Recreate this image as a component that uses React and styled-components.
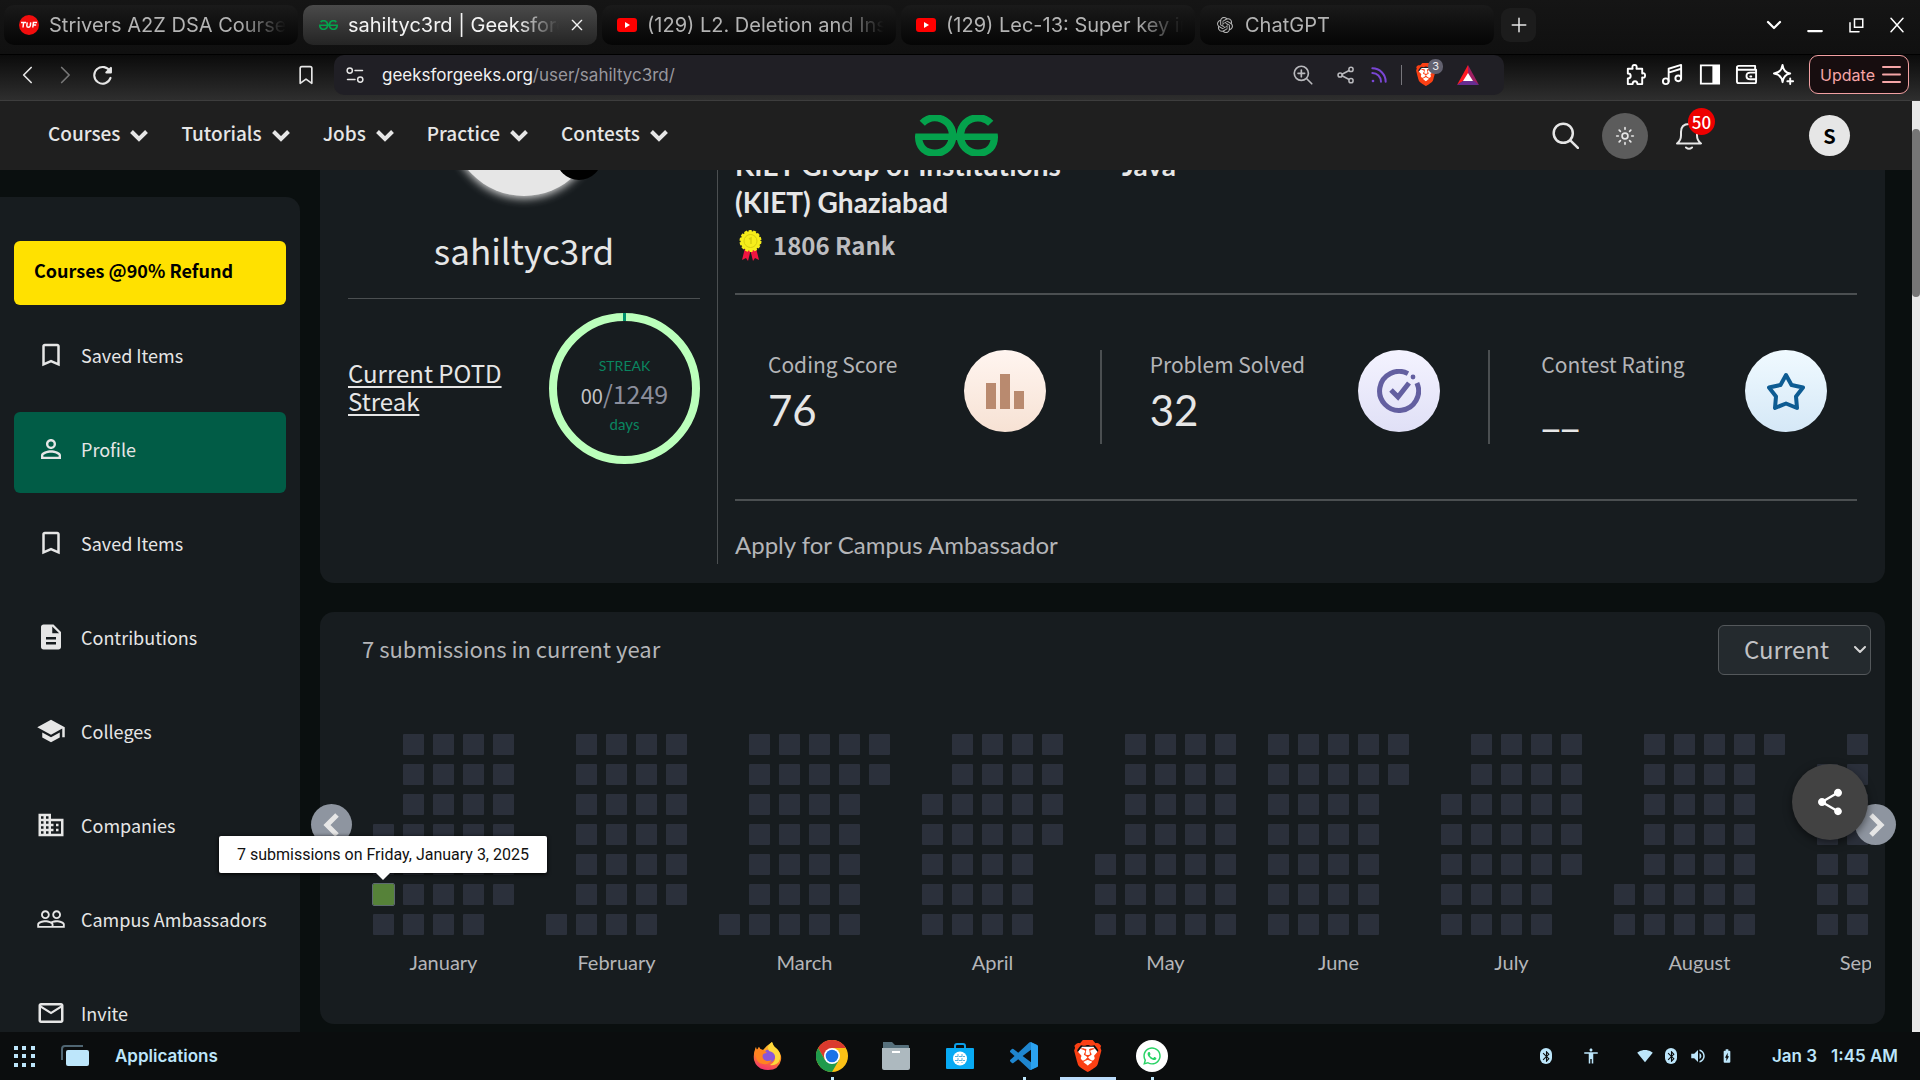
import React from "react";
import styled, { createGlobalStyle, css } from "styled-components";
import {
  MdBookmarkBorder, MdPersonOutline, MdDescription, MdSchool, MdBusiness, MdPeopleOutline,
  MdMailOutline, MdShare, MdBluetooth, MdVolumeUp, MdBatteryChargingFull, MdAccessibility,
  MdSignalWifi4Bar,
} from "react-icons/md";
import { SiGeeksforgeeks, SiBrave, SiOpenai } from "react-icons/si";
import { FaWhatsapp } from "react-icons/fa";

const source = `"Noto Sans CJK SC", "Noto Sans", sans-serif`;
const rounded = `Lato, "Noto Sans", sans-serif`;
const ui = `Inter, "Liberation Sans", sans-serif`;

const GlobalStyle = createGlobalStyle`
  *, *::before, *::after { box-sizing: border-box; }
  body { margin: 0; background: #0a0f0f; overflow: hidden; }
  button { border: 0; background: none; padding: 0; color: inherit; font: inherit; cursor: pointer; }
  a { color: inherit; text-decoration: none; }
  h1, h2, p, ul, dl, dd { margin: 0; padding: 0; }
  svg { display: block; flex: none; }
`;

const Desktop = styled.div`
  display: flex;
  flex-direction: column;
  height: 100vh;
  color: #e6e6e6;
  font-family: ${source};
`;

/* ---------- browser chrome ---------- */
const TabStrip = styled.div`
  display: flex;
  align-items: center;
  height: 55px;
  padding: 0 14px 4px 4px;
  gap: 5px;
  background: linear-gradient(#151515, #101010);
  border-bottom: 1px solid #000;
  font-family: ${ui};
`;
const Tab = styled.div`
  display: flex;
  align-items: center;
  flex: 0 1 294px;
  min-width: 0;
  height: 40px;
  padding: 0 12px 0 15px;
  gap: 10px;
  border-radius: 10px;
  color: ${(p) => (p.$active ? "#f4f4f4" : "#b4b4b4")};
  background: ${(p) => (p.$active ? "linear-gradient(#4a4a4a, #242424)" : "linear-gradient(#1a1a1a, #050505)")};
`;
const TabIcon = styled.span`
  display: grid;
  place-items: center;
  flex: 0 0 20px;
`;
const TabTitle = styled.button`
  flex: 1;
  min-width: 0;
  overflow: hidden;
  white-space: nowrap;
  text-align: left;
  font-size: 20px;
  line-height: 28px;
  mask-image: linear-gradient(90deg, #000 80%, transparent);
`;
const NewTab = styled.button`
  display: grid;
  place-items: center;
  width: 35px;
  height: 34px;
  margin-left: 2px;
  border-radius: 9px;
  background: #1c1c1c;
`;
const WindowControls = styled.div`
  display: flex;
  align-items: center;
  gap: 23px;
  margin-left: auto;
  color: #fff;
`;
const IconButton = styled.button`
  display: grid;
  place-items: center;
  flex: none;
`;
const Toolbar = styled.div`
  display: flex;
  align-items: center;
  height: 46px;
  padding: 0 11px 6px 17px;
  background: linear-gradient(#0b0b0b, #2e2e2e);
  border-bottom: 1px solid #3d3d3d;
  font-family: ${ui};
`;
const History = styled.div`
  display: flex;
  gap: 18px;
  width: 279px;
`;
const AddressBar = styled.div`
  display: flex;
  align-items: center;
  flex: 0 1 1170px;
  height: 40px;
  margin-left: 18px;
  padding: 0 18px 0 12px;
  gap: 18px;
  border-radius: 10px;
  background: #201f25;
`;
const Url = styled.span`
  flex: 1;
  font-size: 17px;
  line-height: 24px;
  color: #98979d;
  b { font-weight: 400; color: #f2f2f2; }
`;
const AddressTools = styled.div`
  display: flex;
  align-items: center;
  gap: 14px;
  color: #b9b9bd;
`;
const Rule = styled.span`
  width: 1px;
  height: 20px;
  background: #77767c;
`;
const ShieldButton = styled(IconButton)`
  position: relative;
`;
const ShieldCount = styled.span`
  position: absolute;
  left: 12px;
  top: -4px;
  width: 15px;
  border-radius: 7px;
  background: #62616f;
  color: #eee;
  font-size: 11px;
  line-height: 15px;
  text-align: center;
`;
const Extensions = styled.div`
  display: flex;
  align-items: center;
  gap: 14px;
  margin-left: auto;
  color: #fff;
`;
const UpdateButton = styled.button`
  display: flex;
  align-items: center;
  gap: 7px;
  height: 39px;
  padding: 0 7px 0 10px;
  border: 1px solid #f2a0a2;
  border-radius: 9px;
  background: #170d0f;
  color: #f6a5a7;
  font-size: 16px;
`;

/* ---------- site ---------- */
const Viewport = styled.div`
  display: flex;
  flex: 1;
  min-height: 0;
`;
const Site = styled.div`
  display: flex;
  flex-direction: column;
  flex: 1;
  min-width: 0;
`;
const ScrollTrack = styled.div`
  width: 8px;
  padding-top: 28px;
  background: #e8e8e8;
`;
const ScrollThumb = styled.div`
  height: 168px;
  border-radius: 4px;
  background: #767676;
`;
const SiteHeader = styled.header`
  display: grid;
  grid-template-columns: 1fr auto 1fr;
  align-items: center;
  height: 69px;
  padding: 0 48px;
  background: #1f1f1f;
  z-index: 1;
`;
const Nav = styled.nav`
  display: flex;
  gap: 33px;
`;
const NavItem = styled.button`
  display: flex;
  align-items: center;
  gap: 10px;
  font-size: 19px;
  line-height: 28px;
  font-weight: 500;
  padding-bottom: 6px;
  svg { margin-top: 5px; }
`;
const HeaderTools = styled.div`
  display: flex;
  align-items: center;
  justify-content: flex-end;
  padding-right: 14px;
`;
const RoundButton = styled.button`
  display: grid;
  place-items: center;
  width: ${(p) => p.$size}px;
  height: ${(p) => p.$size}px;
  border-radius: 50%;
  background: ${(p) => p.$bg};
`;
const ThemeButton = styled(RoundButton)`
  margin: 0 28px 0 23px;
`;
const Avatar = styled(RoundButton)`
  margin-left: 107px;
  color: #000;
  font-size: 20px;
  font-weight: 700;
  line-height: 28px;
`;
const BellButton = styled(IconButton)`
  position: relative;
`;
const BellCount = styled.span`
  position: absolute;
  left: 12px;
  top: -13px;
  width: 27px;
  border-radius: 14px;
  background: #ee0000;
  color: #fff;
  font-size: 17px;
  font-weight: 500;
  line-height: 27px;
`;
const Body = styled.div`
  display: flex;
  flex: 1;
  min-height: 0;
  gap: 20px;
  overflow: hidden;
`;
const Sidebar = styled.aside`
  display: flex;
  flex-direction: column;
  flex: 0 0 300px;
  gap: 13px;
  margin-top: 27px;
  padding: 44px 14px 0;
  border-radius: 0 14px 0 0;
  background: #171c1f;
`;
const Offer = styled.a`
  flex: none;
  height: 64px;
  padding: 16px 20px;
  border-radius: 6px;
  background: #ffe100;
  color: #000;
  font-size: 18px;
  line-height: 26px;
  font-weight: 600;
`;
const SideLink = styled.a`
  display: flex;
  align-items: center;
  flex: none;
  gap: 15px;
  height: 81px;
  padding: 0 0 8px 22px;
  border-radius: 6px;
  font-size: 18px;
  line-height: 28px;
  ${(p) => p.$active && css`background: #015c46;`}
`;
const Main = styled.main`
  display: flex;
  flex-direction: column;
  flex: 1;
  min-width: 0;
  gap: 29px;
  margin: -150px 27px 0 0;
`;
const Card = styled.section`
  flex: none;
  border-radius: 14px;
  background: #171c1f;
`;
const ProfileCard = styled(Card)`
  display: flex;
  height: 563px;
  padding: 30px 28px 19px;
`;
const Person = styled.div`
  flex: 0 0 370px;
  padding-right: 17px;
  border-right: 1px solid #4b4f51;
`;
const Photo = styled.div`
  display: flex;
  align-items: flex-end;
  justify-content: flex-end;
  width: 146px;
  height: 146px;
  margin: 0 auto;
  padding-bottom: 16px;
  border-radius: 50%;
  background: #e6e6e6;
  box-shadow: 0 2px 10px #e6e6e6;
`;
const PhotoEdit = styled(RoundButton)`
  margin-right: -5px;
`;
const Username = styled.h1`
  padding: 26px 0 20px;
  border-bottom: 1px solid #4b4f51;
  font-size: 35px;
  line-height: 56px;
  font-weight: 400;
  text-align: center;
`;
const Streak = styled.div`
  display: flex;
  align-items: center;
  justify-content: space-between;
  margin-top: 14px;
`;
const StreakLink = styled.a`
  width: 170px;
  padding-bottom: 4px;
  font-size: 24px;
  line-height: 28px;
  text-decoration: underline;
  text-underline-offset: 3px;
  text-decoration-thickness: 2px;
`;
const Ring = styled.div`
  display: flex;
  flex-direction: column;
  align-items: center;
  width: 151px;
  height: 151px;
  padding-top: 35px;
  border: 8px solid #bbffbb;
  border-radius: 50%;
  color: #0a8560;
  font-family: ${rounded};
  font-size: 15px;
  line-height: 20px;
  position: relative;
  &::before {
    content: "";
    position: absolute;
    top: -8px;
    width: 3px;
    height: 8px;
    background: #00916e;
  }
`;
const RingCaption = styled.span`
  font-size: 14px;
`;
const RingValue = styled.span`
  color: #8b8e9c;
  font-family: ${source};
  font-size: 25px;
  line-height: 36px;
  margin-top: -1px;
  small { font-size: 20px; color: #c4c4c6; }
`;
const Details = styled.div`
  flex: 1;
  min-width: 0;
  padding-left: 17px;
`;
const Institute = styled.div`
  display: flex;
  gap: 30px;
  padding-top: 97px;
  font-family: ${rounded};
  font-size: 28px;
  line-height: 37px;
  font-weight: 700;
`;
const School = styled.p`
  width: 357px;
`;
const Rank = styled.p`
  display: flex;
  align-items: center;
  gap: 11px;
  padding: 0 0 24px 4px;
  color: #bdbdc0;
  font-size: 24px;
  line-height: 48px;
  font-weight: 600;
`;
const Scores = styled.div`
  display: grid;
  grid-template-columns: 367fr 389fr 367fr;
  padding: 55px 0;
  border: solid #4b4f51;
  border-width: 2px 0;
`;
const Score = styled.div`
  display: flex;
  justify-content: space-between;
  height: 94px;
  padding: 0 ${(p) => p.$right}px 0 ${(p) => p.$left}px;
  border-right: ${(p) => (p.$last ? 0 : 2)}px solid #4b4f51;
`;
const ScoreLabel = styled.p`
  color: #b4b5b8;
  font-size: 21px;
  line-height: 28px;
`;
const ScoreValue = styled.p`
  font-family: ${rounded};
  font-size: 42px;
  line-height: 64px;
`;
const Badge = styled.div`
  display: grid;
  place-items: center;
  width: 82px;
  height: 82px;
  border-radius: 50%;
  background: ${(p) => p.$bg};
`;
const Apply = styled.a`
  display: block;
  padding-top: 28px;
  color: #b4b5b8;
  font-family: ${rounded};
  font-size: 24px;
  line-height: 32px;
`;
const ActivityCard = styled(Card)`
  position: relative;
  height: 412px;
  padding: 13px 14px 0 42px;
`;
const ActivityHead = styled.div`
  display: flex;
  align-items: center;
  justify-content: space-between;
`;
const ActivityTitle = styled.h2`
  padding-bottom: 4px;
  color: #b4b5b8;
  font-size: 22px;
  line-height: 34px;
  font-weight: 400;
`;
const YearPicker = styled.label`
  display: grid;
  align-items: center;
  > * { grid-area: 1 / 1; }
  svg { justify-self: end; margin-right: 5px; pointer-events: none; }
`;
const YearSelect = styled.select`
  appearance: none;
  width: 153px;
  height: 50px;
  padding: 0 25px 4px;
  border: 1px solid #54585b;
  border-radius: 6px;
  background: #242a2e;
  color: #c0c1c4;
  font-family: ${source};
  font-size: 24px;
`;
const Months = styled.div`
  display: flex;
  gap: 32px;
  margin-top: 59px;
  padding-left: 11px;
  overflow: hidden;
`;
const Month = styled.div`
  flex: none;
  color: #b4b5b8;
  font-family: ${rounded};
  font-size: 20px;
  line-height: 28px;
  text-align: center;
`;
const Days = styled.div`
  display: grid;
  grid-template-rows: repeat(7, 21px);
  grid-auto-flow: column;
  grid-auto-columns: 21px;
  gap: 9px;
  margin-bottom: 13px;
`;
const Day = styled.span`
  border-radius: 1px;
  background: ${(p) => (p.$on ? "#568239" : "#2b303b")};
  ${(p) => p.$on && css`outline: 1px solid #5d6a70;`}
  ${(p) => p.$first && css`grid-row-start: ${p.$first};`}
`;
const Pager = styled(RoundButton)`
  position: absolute;
  top: 192px;
  ${(p) => p.$side}: ${(p) => (p.$side === "left" ? -9 : -11)}px;
`;
const ShareFab = styled(RoundButton)`
  position: absolute;
  top: 152px;
  right: 17px;
  box-shadow: 0 3px 8px rgba(0, 0, 0, 0.5);
`;
const Tooltip = styled.div`
  position: absolute;
  top: 224px;
  left: -101px;
  padding: 0 18px;
  border-radius: 2px;
  background: #fff;
  box-shadow: 0 1px 4px #000;
  color: #111;
  font-family: Roboto, "Liberation Sans", sans-serif;
  font-size: 16px;
  line-height: 37px;
  white-space: nowrap;
  &::after {
    content: "";
    position: absolute;
    top: 100%;
    left: 50%;
    margin-left: -7px;
    border: 7px solid transparent;
    border-top-color: #fff;
    border-bottom: 0;
  }
`;

/* ---------- desktop panel ---------- */
const Panel = styled.footer`
  display: grid;
  grid-template-columns: 1fr auto 1fr;
  align-items: stretch;
  height: 48px;
  padding: 0 14px;
  background: #0b0d0e;
  color: #bde6fb;
  font-family: ${ui};
  font-size: 17px;
  font-weight: 600;
`;
const PanelGroup = styled.div`
  display: flex;
  align-items: center;
  justify-content: ${(p) => (p.$end ? "flex-end" : "flex-start")};
  padding-right: ${(p) => (p.$end ? 8 : 0)}px;
  gap: ${(p) => p.$gap}px;
`;
const Apps = styled.div`
  display: flex;
  gap: 8px;
`;
const AppButton = styled.button`
  display: grid;
  place-items: center;
  width: 56px;
  border-bottom: 3px solid ${(p) => (p.$active ? "#bbdcfb" : "transparent")};
  padding-top: 3px;
  position: relative;
  &::after {
    content: "";
    display: ${(p) => (p.$running ? "block" : "none")};
    position: absolute;
    bottom: -3px;
    width: 3px;
    height: 3px;
    background: #bde6fb;
  }
`;
const Pill = styled.span`
  display: grid;
  place-items: center;
  width: 12px;
  height: 16px;
  border-radius: 6px;
  background: #bde6fb;
  color: #0b0d0e;
`;

/* ---------- drawings ---------- */
const Line = ({ w = 24, h = w, box = "0 0 24 24", sw = 2, children, ...rest }) => (
  <svg width={w} height={h} viewBox={box} fill="none" stroke="currentColor" strokeWidth={sw} strokeLinecap="round" strokeLinejoin="round" aria-hidden="true" {...rest}>
    {children}
  </svg>
);
const Chevron = () => (
  <Line w={18} h={13} box="0 0 18 13" sw={4} strokeLinecap="butt" strokeLinejoin="miter"><path d="M1.5 2.5 9 10l7.5-7.5" /></Line>
);
const TufLogo = () => (
  <svg width="20" height="20" viewBox="0 0 20 20" aria-hidden="true">
    <circle cx="10" cy="10" r="10" fill="#f20d0d" />
    <path d="M2 7.5h5M4.6 7.5 4 12.5M8.2 7.3l-.4 3.4q0 1.6 1.6 1.6t1.9-1.6l.4-3.4M13.8 12.5l.6-5H18M14.2 10h3" stroke="#fff" strokeWidth="1.5" fill="none" />
  </svg>
);
const YoutubeLogo = () => (
  <svg width="20" height="14" viewBox="0 0 20 14" aria-hidden="true">
    <rect width="20" height="14" rx="3" fill="#f00" /><path d="m8 4 5 3-5 3z" fill="#fff" />
  </svg>
);
const GeeksLogo = () => <SiGeeksforgeeks viewBox="0 6.1 24 11.8" color="#04a24c" preserveAspectRatio="none" />;
const LogoLink = styled.a`
  svg { width: ${(p) => p.$w}px; height: ${(p) => p.$h}px; }
`;
const Brave = ({ h }) => (
  <svg width={h * 0.86} height={h} viewBox="0 0 24 28" aria-hidden="true">
    <path d="M7 6h10l4 5-3 9-6 5-6-5-3-9z" fill="#fff" />
    <SiBrave x="-2" y="0" width="28" height="28" size="28" color="#fb4014" />
  </svg>
);
const Medal = () => (
  <svg width="23" height="31" viewBox="0 0 23 31" aria-hidden="true">
    <path d="m6 18-3 12 4-2 2 3 2.500-10L14 31l2-3 4 2-3-12z" fill="#ef1540" />
    <circle cx="11.500" cy="11" r="10" fill="#f6ee1b" stroke="#f6ee1b" strokeWidth="2" strokeDasharray="3 1.500" />
    <circle cx="11.500" cy="11" r="6.500" fill="none" stroke="#d8cf10" />
    <path d="m10 9 2-1v6" fill="none" stroke="#d8cf10" strokeWidth="1.500" />
  </svg>
);
const Bars = () => (
  <svg width="40" height="36" viewBox="0 0 40 36" fill="#b98a6f" aria-hidden="true">
    <path d="M1 10h10v26H1zM15 1h10v35H15zM29 18h10v18H29z" />
  </svg>
);
const Solved = () => (
  <Line w={44} box="0 0 44 44" sw={5} color="#635fa0" strokeLinecap="butt" strokeLinejoin="miter">
    <path d="M31 4.600A19.500 19.500 0 1 0 39.900 14" /><path d="m14 21 7 7 11-14" /><circle cx="36" cy="8" r="2.400" fill="currentColor" stroke="none" />
  </Line>
);
const Star = () => (
  <Line w={38} box="0 0 38 38" sw={4} color="#0e5c93">
    <path d="m19 3 5.500 10L36 15.500l-7 9L30 36l-11-4.500L8 36l1-11.500-7-9L13.500 13z" />
  </Line>
);
const Firefox = () => (
  <svg width="32" height="32" viewBox="0 0 32 32" aria-hidden="true">
    <defs>
      <linearGradient id="fx" x1=".7" y1="0" x2=".4" y2="1"><stop offset="0" stopColor="#ffd53a" /><stop offset=".5" stopColor="#ff8b1f" /><stop offset="1" stopColor="#f4346e" /></linearGradient>
    </defs>
    <path d="M4 7q0 2 1 3l2-3q1 3 4 3 3-4 9-8 1 5 5 7 5 5 4 11-2 10-13 10T2 20Q1 13 4 7z" fill="url(#fx)" />
    <circle cx="17" cy="16" r="6.500" fill="#8a56d8" />
    <path d="M20 2q-6 5-3 9 5 1 6 5 1 6-5 9 8 1 10-6 1-6-3-10-4-3-5-7z" fill="#ffd83b" />
    <path d="M4 7q0 2 1 3l2-3q1 3 5 3l3 3q-4 0-5 3 0 4 5 5 3 0 5-1-3 5-9 4T4 17Q2 12 4 7z" fill="#ff8420" />
  </svg>
);
const Chrome = () => (
  <svg width="32" height="32" viewBox="0 0 32 32" aria-hidden="true">
    <circle cx="16" cy="16" r="16" fill="#fbc116" />
    <path d="M2.140 8A16 16 0 0 1 29.860 8H16l-7 12z" fill="#db3a2e" />
    <path d="M2.140 8A16 16 0 0 0 16 32l7-12H9z" fill="#1f9a4c" />
    <circle cx="16" cy="16" r="8" fill="#fff" /><circle cx="16" cy="16" r="6.300" fill="#1b72e8" />
  </svg>
);
const Files = () => (
  <svg width="28" height="28" viewBox="0 0 28 28" aria-hidden="true">
    <path d="M1 0h9l3 3h13q1 0 1 1v6H1z" fill="#566f7b" /><path d="M0 6h28v20q0 2-2 2H2q-2 0-2-2z" fill="#adb9bf" /><path d="M10 9h8v2h-8z" fill="#fff" />
  </svg>
);
const Store = () => (
  <svg width="28" height="26" viewBox="0 0 28 26" aria-hidden="true">
    <path d="M9 6V3q0-2 2-2h6q2 0 2 2v3" fill="none" stroke="#0b9ee8" strokeWidth="2" /><rect y="5" width="28" height="21" rx="1" fill="#08aaf4" />
    <circle cx="14" cy="15.500" r="7" fill="#fff" /><path d="M9 13.500h10M9 17.500h10M12 11v9M16 11v9" stroke="#5bb2dc" strokeDasharray="3 1" />
  </svg>
);
const Code = () => (
  <svg width="28" height="28" viewBox="0 0 24 24" aria-hidden="true">
    <path fill="#1f86cf" d="M23.150 2.587L18.210.210a1.494 1.494 0 0 0-1.705.290l-9.460 8.630-4.120-3.128a.999.999 0 0 0-1.276.057L.327 7.261A1 1 0 0 0 .326 8.740L3.899 12 .326 15.260a1 1 0 0 0 .001 1.479L1.650 17.940a.999.999 0 0 0 1.276.057l4.120-3.128 9.460 8.630a1.492 1.492 0 0 0 1.704.290l4.942-2.377A1.500 1.500 0 0 0 24 20.060V3.939a1.500 1.500 0 0 0-.850-1.352zm-5.146 14.861L10.826 12l7.178-5.448v10.896z" />
    <path fill="#2ba2f0" d="M18 .200 23.150 2.587q.850.500.850 1.352V20.060q0 1-.850 1.400L18 23.800z" />
  </svg>
);
const WhatsApp = () => (
  <svg width="32" height="32" viewBox="0 0 32 32" aria-hidden="true">
    <circle cx="16" cy="16" r="16" fill="#fff" /><FaWhatsapp x="6" y="6" width="20" height="20" size="20" color="#29d366" />
  </svg>
);

/* ---------- data ---------- */
const tabs = [
  { title: "Strivers A2Z DSA Course,", icon: <TufLogo /> },
  { title: "sahiltyc3rd | Geeksforgeeks", icon: <LogoLink as="span" $w={19} $h={10}><GeeksLogo /></LogoLink>, active: true },
  { title: "(129) L2. Deletion and Insertion", icon: <YoutubeLogo /> },
  { title: "(129) Lec-13: Super key in", icon: <YoutubeLogo /> },
  { title: "ChatGPT", icon: <SiOpenai size={16} /> },
];
const sideLinks = [
  ["Saved Items", MdBookmarkBorder],
  ["Profile", MdPersonOutline],
  ["Saved Items", MdBookmarkBorder],
  ["Contributions", MdDescription],
  ["Colleges", MdSchool],
  ["Companies", MdBusiness],
  ["Campus Ambassadors", MdPeopleOutline],
  ["Invite", MdMailOutline],
];
const monthNames = ["January", "February", "March", "April", "May", "June", "July", "August", "September"];
const months = monthNames.map((name, i) => ({
  name,
  first: new Date(2025, i, 1).getDay() + 1,
  days: new Date(2025, i + 1, 0).getDate(),
}));

export default function App() {
  return (
    <Desktop>
      <GlobalStyle />
      <TabStrip>
        {tabs.map((t) => (
          <Tab key={t.title} $active={t.active}>
            <TabIcon>{t.icon}</TabIcon>
            <TabTitle>{t.title}</TabTitle>
            {t.active && <IconButton aria-label="Close tab"><Line w={16}><path d="m5 5 14 14M19 5 5 19" /></Line></IconButton>}
          </Tab>
        ))}
        <NewTab aria-label="New tab"><Line w={18}><path d="M12 3v18M3 12h18" /></Line></NewTab>
        <WindowControls>
          <IconButton aria-label="Search tabs"><Line w={18} sw={3}><path d="m4 8 8 8 8-8" /></Line></IconButton>
          <IconButton aria-label="Minimize"><Line w={18} sw={3}><path d="M3 20h18" /></Line></IconButton>
          <IconButton aria-label="Restore"><Line w={18} strokeLinejoin="miter"><path d="M10 4h11v11H10zM4 9v12h12" /></Line></IconButton>
          <IconButton aria-label="Close window"><Line w={18}><path d="m4 3 16 18M20 3 4 21" /></Line></IconButton>
        </WindowControls>
      </TabStrip>

      <Toolbar>
        <History>
          <IconButton aria-label="Back"><Line w={20}><path d="M17 3 8 12l9 9" /></Line></IconButton>
          <IconButton aria-label="Forward"><Line w={20} color="#777"><path d="m8 3 9 9-9 9" /></Line></IconButton>
          <IconButton aria-label="Reload"><Line w={20} sw={2.5}><path d="M21 15.500A10 10 0 1 1 20.500 8" /><path d="M21.500 3.500V9H16z" fill="currentColor" /></Line></IconButton>
        </History>
        <IconButton aria-label="Bookmark"><Line w={20}><path d="M5 4q0-2 2-2h10q2 0 2 2v18l-7-5-7 5z" /></Line></IconButton>
        <AddressBar>
          <Line w={18}><circle cx="5" cy="6" r="3.500" /><path d="M12 6h10M2 18h10" /><circle cx="19" cy="18" r="3.500" /></Line>
          <Url><b>geeksforgeeks.org</b>/user/sahiltyc3rd/</Url>
          <AddressTools>
            <IconButton aria-label="Zoom"><Line w={20}><circle cx="10" cy="10" r="8.500" /><path d="m16.500 16.500 6 6M10 6v8M6 10h8" /></Line></IconButton>
            <IconButton aria-label="Share"><Line w={30} h={18} box="-11 0 36 24"><circle cx="4.500" cy="12" r="2.800" /><circle cx="19" cy="4.500" r="2.800" /><circle cx="19" cy="19.500" r="2.800" /><path d="m7 11 9.500-5M7 13l9.500 5" /></Line></IconButton>
            <IconButton aria-label="Feed"><Line w={16} sw={3} color="#7a46d4"><path d="M2 9a13 13 0 0 1 13 13M2 2a20 20 0 0 1 20 20" /><circle cx="3" cy="21" r="2" fill="currentColor" stroke="none" /></Line></IconButton>
            <Rule />
            <ShieldButton aria-label="Shields"><Brave h={23} /><ShieldCount>3</ShieldCount></ShieldButton>
            <IconButton aria-label="Rewards">
              <svg width="36" height="20" viewBox="-7 0 36 20" aria-hidden="true"><path d="M11 0 0 20l11-7z" fill="#ff1a24" /><path d="m11 0 11 20-11-7z" fill="#9e1f63" /><path d="M0 20h22l-5-4H6z" fill="#662d91" /><path d="m11 8 5 8H6z" fill="#fff" /></svg>
            </IconButton>
          </AddressTools>
        </AddressBar>
        <Extensions>
          <IconButton aria-label="Extensions"><Line w={23}><path d="M4 6h5q-1-4 2-4t2 4h6v5q3-1 3 2t-3 2v7h-5q0-3-2.500-3T9 22H4v-6q3 0 3-2.500T4 11z" /></Line></IconButton>
          <IconButton aria-label="Playlist"><Line w={23}><circle cx="5" cy="19" r="3" /><circle cx="18" cy="16" r="3" /><path d="M8 19V6l13-4v14M8 10l13-4" /></Line></IconButton>
          <IconButton aria-label="Side panel"><Line w={23} strokeLinejoin="miter"><path d="M3 2.500h19v19H3z" /><path d="M16 3h5v18h-5z" fill="currentColor" /></Line></IconButton>
          <IconButton aria-label="Wallet"><Line w={23}><path d="M21 7V3H4q-2 0-2 2v14q0 2 2 2h17q1 0 1-2v-2M2 5q0 2 2 2h18v10h-6q-4 0-4-3.500t4-3.500h6M16 14h1" /></Line></IconButton>
          <IconButton aria-label="Assistant"><Line w={23}><path d="M11 2q1 8 8 9-7 1-8 9-1-8-9-9 8-1 9-9zM19 16v6M16 19h6" /></Line></IconButton>
          <UpdateButton>Update<Line w={19} box="0 0 19 19"><path d="M1 2h17M1 9.500h17M1 17h17" /></Line></UpdateButton>
        </Extensions>
      </Toolbar>

      <Viewport>
        <Site>
          <SiteHeader>
            <Nav>
              {["Courses", "Tutorials", "Jobs", "Practice", "Contests"].map((n) => (
                <NavItem key={n}>{n}<Chevron /></NavItem>
              ))}
            </Nav>
            <LogoLink href="#" $w={83} $h={41} aria-label="GeeksforGeeks"><GeeksLogo /></LogoLink>
            <HeaderTools>
              <IconButton aria-label="Search"><Line w={27} sw={2.2}><circle cx="10" cy="10" r="8.500" /><path d="m16.500 16.500 6.500 6.500" /></Line></IconButton>
              <ThemeButton $size={46} $bg="#5c5c5c" aria-label="Theme">
                <Line w={20}><circle cx="12" cy="12" r="3.500" /><path d="M12 2v2M12 20v2M2 12h2M20 12h2M5 5l1.500 1.500M17.500 17.500 19 19M5 19l1.500-1.500M17.500 6.500 19 5" /></Line>
              </ThemeButton>
              <BellButton aria-label="Notifications">
                <Line w={26} h={29} box="0 0 26 29"><path d="M1 22.500q4-3 4-8V11q0-8 8-8t8 8v3.500q0 5 4 8zM10 26.500q3 2.500 6 0M13 1v2" /></Line>
                <BellCount>50</BellCount>
              </BellButton>
              <Avatar $size={41} $bg="#e6e6e6">S</Avatar>
            </HeaderTools>
          </SiteHeader>

          <Body>
            <Sidebar>
              <Offer href="#">Courses @90% Refund</Offer>
              {sideLinks.map(([label, Icon], i) => (
                <SideLink href="#" key={i} $active={label === "Profile"}><Icon size={30} />{label}</SideLink>
              ))}
            </Sidebar>

            <Main>
              <ProfileCard>
                <Person>
                  <Photo><PhotoEdit $size={46} $bg="#000" aria-label="Edit photo" /></Photo>
                  <Username>sahiltyc3rd</Username>
                  <Streak>
                    <StreakLink href="#">Current POTD Streak</StreakLink>
                    <Ring>
                      <RingCaption>STREAK</RingCaption>
                      <RingValue><small>00</small>/1249</RingValue>
                      <span>days</span>
                    </Ring>
                  </Streak>
                </Person>
                <Details>
                  <Institute><School>KIET Group of Institutions (KIET) Ghaziabad</School><p>Java</p></Institute>
                  <Rank><Medal />1806 Rank</Rank>
                  <Scores>
                    <Score $left={33} $right={54}>
                      <div><ScoreLabel>Coding Score</ScoreLabel><ScoreValue>76</ScoreValue></div>
                      <Badge $bg="linear-gradient(#fff5f0, #f7e2d4)"><Bars /></Badge>
                    </Score>
                    <Score $left={48} $right={48}>
                      <div><ScoreLabel>Problem Solved</ScoreLabel><ScoreValue>32</ScoreValue></div>
                      <Badge $bg="linear-gradient(#f4f3ff, #e0e0f6)"><Solved /></Badge>
                    </Score>
                    <Score $left={51} $right={30} $last>
                      <div><ScoreLabel>Contest Rating</ScoreLabel><ScoreValue>__</ScoreValue></div>
                      <Badge $bg="linear-gradient(#f0faff, #d5e8f7)"><Star /></Badge>
                    </Score>
                  </Scores>
                  <Apply href="#">Apply for Campus Ambassador</Apply>
                </Details>
              </ProfileCard>

              <ActivityCard>
                <ActivityHead>
                  <ActivityTitle>7 submissions in current year</ActivityTitle>
                  <YearPicker>
                    <YearSelect aria-label="Year"><option>Current</option></YearSelect>
                    <Line w={12} h={8} box="0 0 12 8" color="#d5d5d5"><path d="m1 1 5 5 5-5" /></Line>
                  </YearPicker>
                </ActivityHead>
                <Months>
                  {months.map((m, mi) => (
                    <Month key={m.name}>
                      <Days>
                        {Array.from({ length: m.days }, (_, d) => (
                          <Day key={d} $first={d === 0 ? m.first : 0} $on={mi === 0 && d === 2} />
                        ))}
                      </Days>
                      {m.name}
                    </Month>
                  ))}
                </Months>
                <Pager $size={41} $bg="#8e95a0" $side="left" aria-label="Previous"><Line w={24} sw={5} strokeLinecap="butt" strokeLinejoin="miter"><path d="m17 2-10 10 10 10" /></Line></Pager>
                <Pager $size={41} $bg="#8e95a0" $side="right" aria-label="Next"><Line w={24} sw={5} strokeLinecap="butt" strokeLinejoin="miter"><path d="m7 2 10 10L7 22" /></Line></Pager>
                <ShareFab $size={76} $bg="#424242" aria-label="Share profile"><MdShare size={32} color="#fff" /></ShareFab>
                <Tooltip role="tooltip">7 submissions on Friday, January 3, 2025</Tooltip>
              </ActivityCard>
            </Main>
          </Body>
        </Site>
        <ScrollTrack><ScrollThumb /></ScrollTrack>
      </Viewport>

      <Panel>
        <PanelGroup $gap={26}>
          <IconButton aria-label="App grid">
            <svg width="21" height="21" viewBox="0 0 21 21" fill="currentColor" aria-hidden="true"><path d="M0 0h4v4H0zM8 0h4v4H8zM17 0h4v4h-4zM0 8h4v4H0zM8 8h4v4H8zM17 8h4v4h-4zM0 17h4v4H0zM8 17h4v4H8zM17 17h4v4h-4z" /></svg>
          </IconButton>
          <IconButton aria-label="Workspaces">
            <svg width="28" height="22" viewBox="0 0 28 22" aria-hidden="true"><path d="M1 15V4q0-3 3-3h18" fill="none" stroke="#4f6572" strokeWidth="2" /><rect x="5" y="5" width="23" height="16" rx="2" fill="#bde6fb" /></svg>
          </IconButton>
          <button>Applications</button>
        </PanelGroup>
        <Apps>
          <AppButton aria-label="Firefox"><Firefox /></AppButton>
          <AppButton aria-label="Chrome" $running><Chrome /></AppButton>
          <AppButton aria-label="Files"><Files /></AppButton>
          <AppButton aria-label="Software"><Store /></AppButton>
          <AppButton aria-label="VS Code" $running><Code /></AppButton>
          <AppButton aria-label="Brave" $active><Brave h={32} /></AppButton>
          <AppButton aria-label="WhatsApp" $running><WhatsApp /></AppButton>
        </Apps>
        <PanelGroup $gap={37} $end>
          <PanelGroup $gap={30}>
            <Pill><MdBluetooth size={13} /></Pill>
            <MdAccessibility size={18} />
          </PanelGroup>
          <PanelGroup $gap={12}>
            <MdSignalWifi4Bar size={16} />
            <Pill><MdBluetooth size={13} /></Pill>
            <MdVolumeUp size={18} />
            <MdBatteryChargingFull size={16} />
          </PanelGroup>
          <PanelGroup $gap={14}><span>Jan 3</span><time>1:45 AM</time></PanelGroup>
        </PanelGroup>
      </Panel>
    </Desktop>
  );
}
